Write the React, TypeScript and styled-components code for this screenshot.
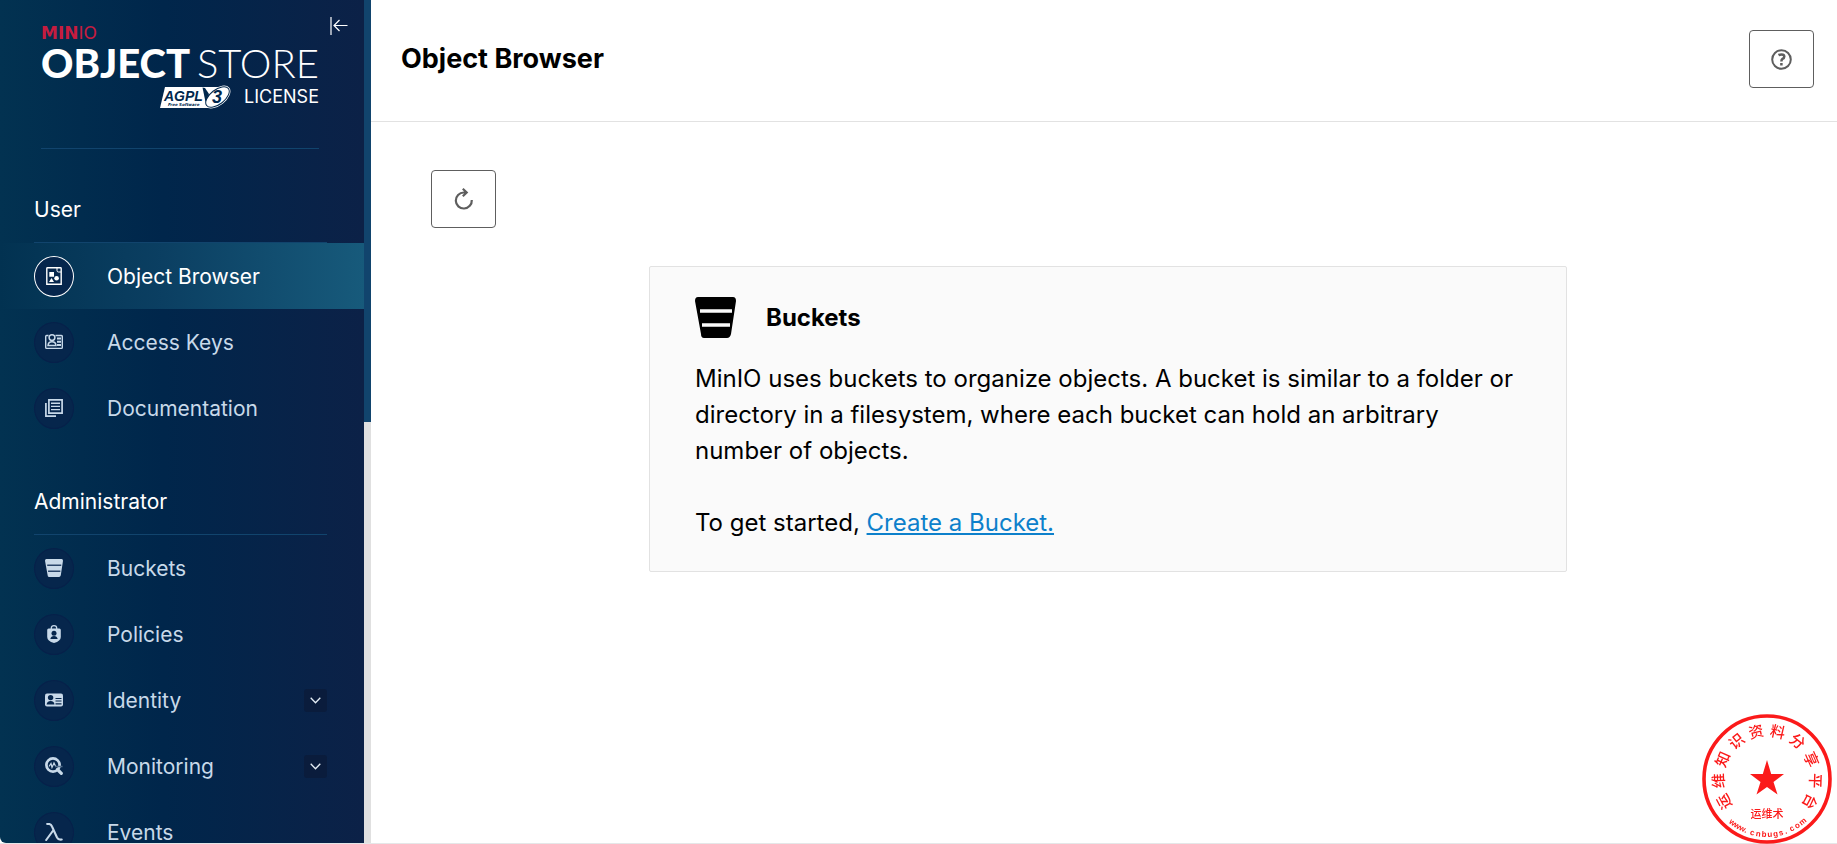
import React from "react";
import styled, { createGlobalStyle } from "styled-components";

const Global = createGlobalStyle`
  *{box-sizing:border-box}
  body{margin:0;background:#fff;color:#000;font-family:Inter,"Liberation Sans",sans-serif}
  button{font:inherit;padding:0;cursor:pointer}
`;

const Page = styled.div`
  display:flex;height:100vh;overflow:hidden;border-bottom:1px solid #e5e7e8;
`;
const Sidebar = styled.nav`
  position:relative;display:flex;flex:0 0 371px;min-width:0;overflow:hidden;
`;
const MenuArea = styled.div`
  flex:1;min-width:0;overflow:hidden;
  background:linear-gradient(90deg,#023251 0%,#00264b 45%,#0c2147 100%);
  border-bottom-left-radius:6px;
`;
const Track = styled.div`width:7px;flex:none;background:#e0e0e0;`;
const Thumb = styled.div`height:50%;background:#11446d;`;

const Brand = styled.div`
  margin:0 45px 0 41px;height:149px;padding-top:24px;border-bottom:1px solid #11446d;color:#fff;white-space:nowrap;
`;
const Collapse = styled.button`
  position:absolute;top:16px;right:22px;width:20px;height:20px;border:0;background:none;color:#fff;
  svg{display:block}
`;
const Company = styled.div`
  font:bold 17px/18px "DejaVu Sans",sans-serif;color:#c51c3f;
  span{font-weight:400}
`;
const Product = styled.div`
  display:flex;justify-content:space-between;font:900 40px/42px Lato,sans-serif;
  span{font-weight:300}
`;
const License = styled.div`
  display:flex;justify-content:flex-end;align-items:center;gap:12px;font-size:18px;line-height:26px;
`;

const Section = styled.div`
  margin:0 37px 0 34px;border-bottom:1px solid #11446d;height:94px;display:flex;align-items:center;padding-top:28px;
  font-size:21px;line-height:26px;color:#fff;
`;
const Group = styled.ul`list-style:none;margin:0;padding:0;`;
const Item = styled.a<{ $active?: boolean }>`
  display:flex;align-items:center;height:66px;padding:0 37px 0 34px;font-size:21px;text-decoration:none;
  color:${(p) => (p.$active ? "#fff" : "#c8d9e9")};
  background:${(p) => (p.$active ? "linear-gradient(90deg,#023251 0%,#0b3f62 45%,#175a7b 100%)" : "none")};
`;
const Disc = styled.span<{ $active?: boolean }>`
  display:flex;align-items:center;justify-content:center;width:40px;height:41px;margin-right:33px;border-radius:50%;
  background:#06264c;border:1px solid ${(p) => (p.$active ? "#fff" : "#07204a")};
`;
const Arrow = styled.span`
  display:flex;align-items:center;justify-content:center;margin-left:auto;width:23px;height:23px;border-radius:3px;background:#0a1c3c;
`;

const Main = styled.main`flex:1;min-width:0;`;
const Header = styled.header`
  display:flex;justify-content:space-between;align-items:flex-start;height:122px;padding:30px 23px 0 30px;border-bottom:1px solid #e2e2e2;
`;
const Title = styled.h1`margin:12px 0 0;font-size:27px;line-height:34px;font-weight:700;`;
const IconButton = styled.button`
  display:flex;align-items:center;justify-content:center;width:65px;height:58px;border:1px solid #5e5e5e;border-radius:4px;background:#fff;color:#5e5e5e;
`;
const Content = styled.section`padding:48px 52px 0 60px;`;
const Card = styled.article`
  max-width:918px;margin:38px auto 0;padding:30px 45px;background:#fafafa;border:1px solid #e2e2e2;border-radius:2px;
`;
const CardTitle = styled.h2`
  display:flex;align-items:center;gap:30px;height:41px;margin:0 0 23px;font-size:24px;font-weight:700;
`;
const Text = styled.p`margin:0 0 36px;font-size:24px;line-height:36px;&:last-child{margin:0}`;
const Link = styled.a`color:#0d80cb;`;
const StampBox = styled.div`position:fixed;right:4px;bottom:-1px;width:132px;height:132px;svg{display:block}`;

const Bucket = ({ size, line }: { size: number; line: string }) => (
  <svg width={size} height={size} viewBox="0 0 41 41">
    <path fill="currentColor" d="M3 0H38Q41 0 41 4L36 37Q35 41 32 41H9Q6 41 6 37L0 4Q0 0 3 0Z" />
    <path stroke={line} strokeWidth="3.4" d="M5 14H37M7 28H35" />
  </svg>
);

const G = ({ children }: { children: React.ReactNode }) => (
  <svg width="18" height="18" viewBox="0 0 18 18" fill="none" stroke="currentColor">{children}</svg>
);
const dark = "#06264c";
const icons: Record<string, React.ReactNode> = {
  browser: (
    <G>
      <path strokeWidth="1.4" d="M2.500 .7H15.500Q16.200 .7 16.200 1.400V17.300H1.800V1.400Q1.800 .7 2.500 .7Z" />
      <path d="M12 1V3.500Q12 5 13.500 5H16" />
      <path fill="currentColor" stroke="none" d="M4.300 5H9V9.700H4.300ZM4 15L6.500 11L9 15Z" />
      <circle cx="11.600" cy="11.300" r="2.300" fill="currentColor" stroke="none" />
    </G>
  ),
  keys: (
    <G>
      <path strokeWidth="1.4" d="M3.500 2.500H1.600Q.7 2.500 .7 3.500V14.500Q.7 15.400 1.600 15.400H16.400Q17.300 15.400 17.300 14.500V3.500Q17.300 2.500 16.400 2.500H10.500" />
      <circle cx="7" cy="4.600" r="2.900" strokeWidth="1.500" />
      <path strokeWidth="1.500" d="M3 12.600Q3.300 8.800 7 8.800T11 12.600Z" />
      <path strokeWidth="2" d="M12 5.500H16M12 8.800H16M12 12H16" />
    </G>
  ),
  docs: (
    <G>
      <path strokeWidth="1.700" d="M3.900 .9H17.100V14.100H3.900ZM.9 4V17.100H11" />
      <path strokeWidth="1.400" d="M6 4.300H15M6 7.400H15M6 10.600H15" />
    </G>
  ),
  bucket: <Bucket size={18} line="#29456a" />,
  policy: (
    <G>
      <path strokeWidth="1.300" d="M6.300 4V3Q6.300 .7 9 .7T11.700 3V4" />
      <path fill="currentColor" stroke="none" d="M3.600 3.500H14.400Q15.800 3.500 15.800 5V12Q15.800 16 9 18Q2.200 16 2.200 12V5Q2.200 3.500 3.600 3.500Z" />
      <circle cx="9" cy="8.300" r="2.500" fill={dark} stroke="none" />
      <path fill={dark} stroke="none" d="M5.300 14Q6 11 9 11T12.700 14Z" />
    </G>
  ),
  identity: (
    <G>
      <rect x="0" y="2.500" width="18" height="13" rx="2" fill="currentColor" stroke="none" />
      <circle cx="5.600" cy="6.600" r="2.700" fill={dark} stroke="none" />
      <path fill={dark} stroke="none" d="M1.600 13.500Q2 10 5.600 10T9.500 13.500Z" />
      <path stroke={dark} strokeWidth="1.200" d="M10.500 7.500H16.500M10.500 10H16.500M10.500 12.800H16.500" />
    </G>
  ),
  monitor: (
    <G>
      <circle cx="8" cy="8" r="6.600" strokeWidth="2.700" />
      <path strokeWidth="3.200" strokeLinecap="round" d="M12.500 12.500L16.300 16.300" />
      <path d="M4 9.500L6 6.500L7 10.500L9 6L10.500 9" strokeWidth="1.200" />
      <path d="M10 9.500H17.500" stroke="#56708e" strokeWidth="1.500" />
    </G>
  ),
  events: (
    <G>
      <path strokeWidth="2.100" strokeLinecap="round" strokeLinejoin="round" d="M2.200 1H4Q6 1 7 3.500L12 14.500Q13.300 17 16.700 16.500M8.500 7L1.200 17" />
    </G>
  ),
};

type Entry = { label: string; icon: string; active?: boolean; more?: boolean };
const userItems: Entry[] = [
  { label: "Object Browser", icon: "browser", active: true },
  { label: "Access Keys", icon: "keys" },
  { label: "Documentation", icon: "docs" },
];
const adminItems: Entry[] = [
  { label: "Buckets", icon: "bucket" },
  { label: "Policies", icon: "policy" },
  { label: "Identity", icon: "identity", more: true },
  { label: "Monitoring", icon: "monitor", more: true },
  { label: "Events", icon: "events" },
];

const Menu = ({ items }: { items: Entry[] }) => (
  <Group>
    {items.map((it) => (
      <li key={it.label}>
        <Item href="#" $active={it.active}>
          <Disc $active={it.active}>{icons[it.icon]}</Disc>
          {it.label}
          {it.more && (
            <Arrow>
              <svg width="11" height="7" viewBox="0 0 11 7" fill="none" stroke="#e4edf5" strokeWidth="1.300"><path d="M.7 .7L5.500 5.700L10.300 .7" /></svg>
            </Arrow>
          )}
        </Item>
      </li>
    ))}
  </Group>
);

const Agpl = () => (
  <svg width="72" height="24" viewBox="0 0 72 24">
    <path fill="#fff" d="M5 2H62L50 23H0Z" />
    <ellipse cx="57.500" cy="12" rx="15" ry="8.500" transform="rotate(-38 57.500 12)" fill="#fff" />
    <ellipse cx="57.500" cy="12" rx="13.800" ry="7.300" transform="rotate(-38 57.500 12)" fill="none" stroke="#00284d" strokeWidth="1" />
    <path d="M42.500 2.500L45.500 17L49 9L45 3Z" fill="#00284d" />
    <text x="4" y="16" fontFamily="Liberation Sans, sans-serif" fontStyle="italic" fontWeight="bold" fontSize="14" fill="#00284d">AGPL</text>
    <text x="52" y="18" fontFamily="Liberation Sans, sans-serif" fontStyle="italic" fontWeight="bold" fontSize="18" fill="#00284d">3</text>
    <text x="8" y="21" fontFamily="DejaVu Sans, sans-serif" fontWeight="bold" fontStyle="italic" fontSize="4" fill="#00284d">Free Software</text>
  </svg>
);

/* Glyph origins for a string set around a circle; each glyph is centred on its angle. */
const around = (angles: number[], radius: number, half: number, flip: boolean) => {
  const pts = angles.map((a) => {
    const t = (a * Math.PI) / 180;
    const r = flip ? -t : t;
    const cx = radius * Math.sin(t);
    const cy = flip ? radius * Math.cos(t) : -radius * Math.cos(t);
    return [cx - half * Math.cos(r), cy - half * Math.sin(r), (r * 180) / Math.PI];
  });
  const list = (k: number) => pts.map((p) => p[k].toFixed(2)).join(" ");
  return { x: list(0), y: list(1), rotate: list(2) };
};
const ring = around([-118, -92, -66, -39, -13, 13, 39, 66, 92, 118], 43, 7.5, false);
const site = around(Array.from({ length: 14 }, (_, i) => -39 + i * 6), 58, 2.5, true);

const Stamp = () => (
  <StampBox>
    <svg width="132" height="132" viewBox="-66 -66 132 132" fill="#fb1a1a">
      <circle r="63" fill="none" stroke="#fb1a1a" strokeWidth="3.600" />
      <path d="M0 -19L4.200 -5H17L6.500 3L10.500 15.500L0 8L-10.500 15.500L-6.500 3L-17 -5H-4.200Z" />
      <text {...ring} fontFamily="Noto Sans CJK SC, sans-serif" fontSize="15" fontWeight="500">运维知识资料分享平台</text>
      <text y="39" textAnchor="middle" fontFamily="Noto Sans CJK SC, sans-serif" fontSize="11" fontWeight="500">运维术</text>
      <text {...site} fontFamily="Liberation Sans, sans-serif" fontSize="8" fontWeight="bold">www.cnbugs.com</text>
    </svg>
  </StampBox>
);

export default function App() {
  return (
    <>
      <Global />
      <Page>
        <Sidebar>
          <MenuArea>
            <Brand>
              <Company>MIN<span>IO</span></Company>
              <Product>OBJECT<span>STORE</span></Product>
              <License><Agpl />LICENSE</License>
            </Brand>
            <Section>User</Section>
            <Menu items={userItems} />
            <Section>Administrator</Section>
            <Menu items={adminItems} />
          </MenuArea>
          <Track><Thumb /></Track>
          <Collapse aria-label="Collapse menu">
            <svg width="20" height="20" viewBox="0 0 20 20" fill="none" stroke="currentColor" strokeWidth="1.200">
              <path d="M2 1V19M18.500 9.500H5M10.500 4L5 9.500L10.500 15" />
            </svg>
          </Collapse>
        </Sidebar>
        <Main>
          <Header>
            <Title>Object Browser</Title>
            <IconButton aria-label="Help">
              <svg width="21" height="21" viewBox="0 0 21 21" fill="none" stroke="currentColor" strokeWidth="2">
                <circle cx="10.500" cy="10.500" r="9.300" />
                <path strokeWidth="2.500" d="M7.500 6.200Q9 5.400 10.500 5.400Q13.300 5.400 13.300 7.500Q13.300 9 11.500 9.900Q10.400 10.600 10.400 12.400M10.400 13.900V16.400" />
              </svg>
            </IconButton>
          </Header>
          <Content>
            <IconButton aria-label="Refresh">
              <svg width="20" height="22" viewBox="0 0 20 22" fill="none" stroke="currentColor" strokeWidth="2.200">
                <path d="M17.800 12A8 8 0 1 1 9.800 4.500H12.500M8.800 .8L12.700 4.500L8.800 8.200" />
              </svg>
            </IconButton>
            <Card>
              <CardTitle><Bucket size={41} line="#fafafa" />Buckets</CardTitle>
              <Text>MinIO uses buckets to organize objects. A bucket is similar to a folder or directory in a filesystem, where each bucket can hold an arbitrary number of objects.</Text>
              <Text>To get started, <Link href="#">Create a Bucket.</Link></Text>
            </Card>
          </Content>
        </Main>
      </Page>
      <Stamp />
    </>
  );
}
